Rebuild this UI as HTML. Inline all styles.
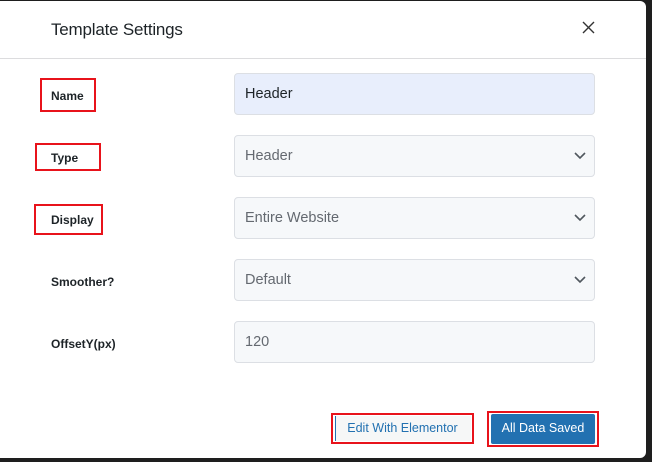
<!DOCTYPE html><html><head><style>
body{margin:0;width:652px;height:462px;background:#1e1e1e;position:relative;overflow:hidden;font-family:"Liberation Sans",sans-serif}
.m{position:absolute;left:0;top:1px;width:646px;height:457px;background:#fff;border-radius:0 6px 6px 0}
.t{position:absolute;left:51px;top:19px;font-size:17px;color:#1d2327;letter-spacing:-0.2px}
.hr{position:absolute;left:0;top:57px;width:646px;height:1px;background:#dcdcde}
.l{position:absolute;left:51px;font-size:12px;font-weight:bold;color:#1d2327}
.rb{position:absolute;border:2.5px solid #e8131b;box-sizing:border-box}
.i{position:absolute;left:234px;width:361px;height:42px;box-sizing:border-box;border:1px solid #dcdfe4;border-radius:4px;background:#f6f8fa;color:#646970;font-size:14.5px;padding:12px 10px}
.i svg{position:absolute;right:8px;top:16px}
</style></head><body><div class="m">
<div class="t">Template Settings</div>
<svg style="position:absolute;left:582px;top:20px" width="13" height="13"><path d="M1 1L12 12M12 1L1 12" stroke="#333" stroke-width="1.4"/></svg>
<div class="hr"></div>
<div class="l" style="top:88px">Name</div><div class="rb" style="left:40px;top:77px;width:56px;height:34px"></div>
<div class="l" style="top:150px">Type</div><div class="rb" style="left:35px;top:142px;width:66px;height:28px"></div>
<div class="l" style="top:212px">Display</div><div class="rb" style="left:34px;top:203px;width:69px;height:31px"></div>
<div class="l" style="top:274px">Smoother?</div>
<div class="l" style="top:336px">OffsetY(px)</div>
<div class="i" style="top:72px;background:#e8eefc;color:#1d2327">Header</div>
<div class="i" style="top:134px">Header<svg width="12" height="8"><path d="M1 1l5 5 5-5" stroke="#50575e" stroke-width="1.6" fill="none"/></svg></div>
<div class="i" style="top:196px">Entire Website<svg width="12" height="8"><path d="M1 1l5 5 5-5" stroke="#50575e" stroke-width="1.6" fill="none"/></svg></div>
<div class="i" style="top:258px">Default<svg width="12" height="8"><path d="M1 1l5 5 5-5" stroke="#50575e" stroke-width="1.6" fill="none"/></svg></div>
<div class="i" style="top:320px">120</div>
<div class="rb" style="left:331px;top:412px;width:143px;height:31px;background:#fff"></div>
<div style="position:absolute;left:335px;top:415px;width:135px;height:25px;background:#f6f7f7;border-left:1px solid #2271b1"></div>
<div style="position:absolute;left:331px;top:420px;width:143px;text-align:center;font-size:12.5px;color:#2271b1">Edit With Elementor</div>
<div class="rb" style="left:487px;top:410px;width:112px;height:36px;background:#fff"></div>
<div style="position:absolute;left:491px;top:413px;width:104px;height:30px;background:#2271b1;border-radius:2px"></div>
<div style="position:absolute;left:487px;top:420px;width:112px;text-align:center;font-size:12.5px;color:#fff">All Data Saved</div>
</div></body></html>
